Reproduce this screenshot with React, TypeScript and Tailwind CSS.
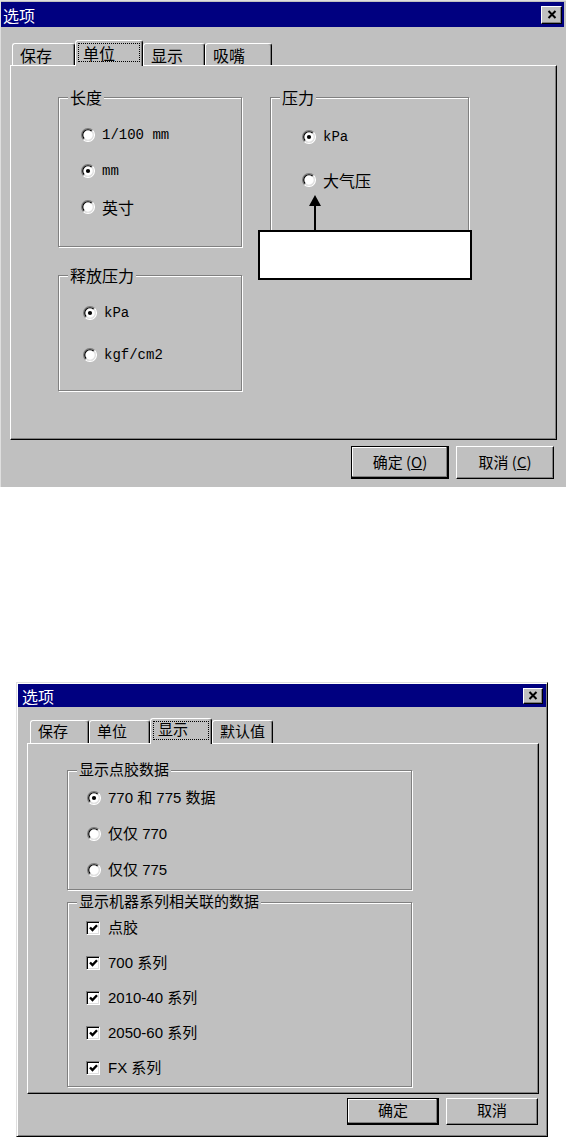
import React from 'react';

const raised =
  'border border-t-white border-l-white border-r-black border-b-black shadow-[inset_-1px_-1px_0_#808080]';

const Radio = ({ checked }: { checked?: boolean }) => (
  <svg width="14" height="14" viewBox="0 0 12 12" className="shrink-0">
    <circle cx="6" cy="6" r="5" fill="#fff" />
    <path d="M2.1 9.9 A5.5 5.5 0 0 1 9.9 2.1" fill="none" stroke="#808080" />
    <path d="M9.9 2.1 A5.5 5.5 0 0 1 2.1 9.9" fill="none" stroke="#fff" />
    <path d="M2.8 9.2 A4.5 4.5 0 0 1 9.2 2.8" fill="none" stroke="#000" />
    <path d="M9.2 2.8 A4.5 4.5 0 0 1 2.8 9.2" fill="none" stroke="#dfdfdf" />
    {checked && <circle cx="6" cy="6" r="1.8" fill="#000" />}
  </svg>
);

const Check = () => (
  <span className="w-[14px] h-[14px] shrink-0 bg-white border border-t-[#808080] border-l-[#808080] border-r-white border-b-white shadow-[inset_1px_1px_0_#000,inset_-1px_-1px_0_#dfdfdf] flex items-center justify-center">
    <svg width="9" height="8" viewBox="0 0 9 8">
      <path d="M1 3.5 L3.5 6 L8 1.2" fill="none" stroke="#000" strokeWidth="2.4" />
    </svg>
  </span>
);

const CloseBtn = ({ className }: { className: string }) => (
  <div className={`flex items-center justify-center bg-[#c0c0c0] ${raised} ${className}`}>
    <svg width="10" height="9" viewBox="0 0 10 9">
      <path d="M1.5 1 L8.5 8 M8.5 1 L1.5 8" stroke="#000" strokeWidth="2" />
    </svg>
  </div>
);

const Tab = ({ label, active, className }: { label: string; active?: boolean; className: string }) =>
  active ? (
    <div className={`relative z-10 -mb-px flex bg-[#c0c0c0] border-t border-l border-r border-t-white border-l-white border-r-black rounded-t-[3px] shadow-[inset_-1px_0_0_#808080] ${className}`}>
      <span className="flex-1 mx-[2px] mt-[2px] mb-[4px] border border-dotted border-black flex items-center pl-[4px]">
        {label}
      </span>
    </div>
  ) : (
    <div className={`flex items-center pl-[7px] border-t border-l border-r border-t-white border-l-white border-r-black rounded-t-[3px] shadow-[inset_-1px_0_0_#808080] ${className}`}>
      {label}
    </div>
  );

const Group = ({ title, className, children }: { title: string; className: string; children: React.ReactNode }) => (
  <div className={`relative flex flex-col border border-[#808080] shadow-[inset_1px_1px_0_#fff,1px_1px_0_#fff] ${className}`}>
    <span className="absolute left-[9px] -top-[11px] px-[2px] bg-[#c0c0c0] leading-[20px]">{title}</span>
    {children}
  </div>
);

const Option = ({ checked, label, mono }: { checked?: boolean; label: string; mono?: boolean }) => (
  <div className="flex items-center gap-[7px] h-[20px]">
    <Radio checked={checked} />
    <span className={mono ? "font-['Liberation_Mono','Noto_Sans_CJK_SC',monospace] text-[14px]" : ''}>{label}</span>
  </div>
);

const CheckRow = ({ label }: { label: string }) => (
  <div className="flex items-center gap-[8px] h-[20px]">
    <Check />
    <span>{label}</span>
  </div>
);

function UnitsDialog() {
  return (
    <div className="w-[566px] h-[487px] bg-[#c0c0c0] border-t border-l border-[#dfdfdf] pt-px flex flex-col text-[16px]">
      <div className="h-[25px] mr-[2px] bg-[#000080] flex items-center justify-between pl-[2px] pr-[2px]">
        <span className="text-white">选项</span>
        <CloseBtn className="w-[21px] h-[18px]" />
      </div>

      <div className="flex items-end h-[25px] mt-[13px] ml-[11px]">
        <Tab label="保存" className="w-[63px] h-[22px]" />
        <Tab label="单位" active className="w-[68px] h-[26px]" />
        <Tab label="显示" className="w-[62px] h-[22px]" />
        <Tab label="吸嘴" className="w-[67px] h-[22px]" />
      </div>

      <div className="relative ml-[9px] w-[547px] h-[375px] border border-t-white border-l-white border-r-black border-b-black shadow-[inset_-1px_-1px_0_#808080] flex pl-[47px] pt-[31px]">
        <div className="flex flex-col gap-[28px]">
          <Group title="长度" className="w-[184px] h-[150px] pl-[22px] pt-[27px] gap-[16px]">
            <Option label="1/100 mm" mono />
            <Option label="mm" checked mono />
            <Option label="英寸" />
          </Group>
          <Group title="释放压力" className="w-[184px] h-[116px] pl-[24px] pt-[27px] gap-[22px]">
            <Option label="kPa" checked mono />
            <Option label="kgf/cm2" mono />
          </Group>
        </div>
        <Group title="压力" className="ml-[28px] w-[199px] h-[150px] pl-[31px] pt-[29px] gap-[23px]">
          <Option label="kPa" checked mono />
          <Option label="大气压" />
        </Group>

        <svg className="absolute left-[298px] top-[129px]" width="12" height="37" viewBox="0 0 12 37">
          <path d="M6 0 L12 11 L0 11 Z" fill="#000" />
          <path d="M6 10 V37" stroke="#000" strokeWidth="2" />
        </svg>
        <div className="absolute left-[247px] top-[164px] w-[214px] h-[50px] bg-white border-2 border-black" />
      </div>

      <div className="flex justify-end gap-[7px] pr-[12px] mt-[6px] text-[15px]">
        <button className="w-[98px] h-[33px] bg-[#c0c0c0] border border-black shadow-[inset_-1px_-1px_0_#000,inset_-2px_-2px_0_#808080,inset_1px_1px_0_#fff]">
          确定 (<u>O</u>)
        </button>
        <button className={`w-[98px] h-[33px] bg-[#c0c0c0] ${raised}`}>
          取消 (<u>C</u>)
        </button>
      </div>
    </div>
  );
}

function DisplayDialog() {
  return (
    <div className="ml-[16px] mt-[195px] w-[532px] h-[455px] bg-[#c0c0c0] border border-t-[#dfdfdf] border-l-[#dfdfdf] border-r-black border-b-black shadow-[inset_1px_1px_0_#fff,inset_-1px_-1px_0_#808080] pt-px flex flex-col text-[15px] font-['Liberation_Sans','Noto_Sans_CJK_SC',sans-serif]">
      <div className="h-[23px] mx-[1px] bg-[#000080] flex items-center justify-between pl-[4px] pr-[3px]">
        <span className="text-white text-[16px] font-['Noto_Sans_CJK_SC',sans-serif]">选项</span>
        <CloseBtn className="w-[20px] h-[16px]" />
      </div>

      <div className="flex items-end h-[25px] mt-[11px] ml-[13px]">
        <Tab label="保存" className="w-[59px] h-[23px]" />
        <Tab label="单位" className="w-[61px] h-[23px]" />
        <Tab label="显示" active className="w-[62px] h-[26px]" />
        <Tab label="默认值" className="w-[61px] h-[23px]" />
      </div>

      <div className="ml-[10px] w-[512px] h-[351px] border border-t-white border-l-white border-r-black border-b-black shadow-[inset_-1px_-1px_0_#808080] flex flex-col gap-[12px] pl-[39px] pt-[26px]">
        <Group title="显示点胶数据" className="w-[345px] h-[120px] pl-[19px] pt-[17px] gap-[16px]">
          <Option label="770 和 775 数据" checked />
          <Option label="仅仅 770" />
          <Option label="仅仅 775" />
        </Group>
        <Group title="显示机器系列相关联的数据" className="w-[345px] h-[185px] pl-[18px] pt-[15px] gap-[15px]">
          <CheckRow label="点胶" />
          <CheckRow label="700 系列" />
          <CheckRow label="2010-40 系列" />
          <CheckRow label="2050-60 系列" />
          <CheckRow label="FX 系列" />
        </Group>
      </div>

      <div className="flex justify-end gap-[7px] pr-[9px] mt-[4px]">
        <button className="w-[92px] h-[27px] bg-[#c0c0c0] border border-black shadow-[inset_-1px_-1px_0_#000,inset_-2px_-2px_0_#808080,inset_1px_1px_0_#fff]">
          确定
        </button>
        <button className={`w-[92px] h-[27px] bg-[#c0c0c0] ${raised}`}>取消</button>
      </div>
    </div>
  );
}

export default function App() {
  return (
    <div className="w-[566px] h-[1138px] bg-white overflow-hidden text-black font-['Noto_Sans_CJK_SC',sans-serif]">
      <UnitsDialog />
      <DisplayDialog />
    </div>
  );
}
